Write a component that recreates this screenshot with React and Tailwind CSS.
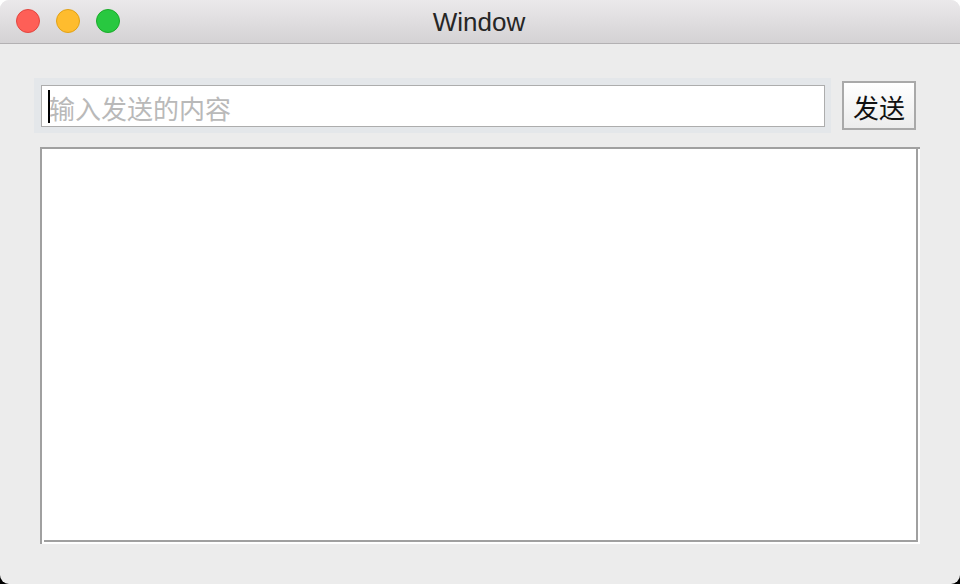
import React from "react";

const Light = ({ bg, ring }) => (
  <div className={`w-[24px] h-[24px] rounded-full border ${bg} ${ring}`} />
);

const App = () => {
  return (
    <div className="w-[960px] h-[584px] bg-[linear-gradient(to_bottom,#ffffff_50%,#000000_50%)]">
      <div className="w-full h-full bg-[#ececec] rounded-[9px] overflow-hidden flex flex-col">
        <div className="relative h-[44px] shrink-0 bg-[linear-gradient(to_bottom,#ebe9eb,#d4d2d4)] border-b border-[#b3b1b3] flex items-center justify-center">
          <div className="absolute left-[16px] top-[9px] flex gap-[16px]">
            <Light bg="bg-[#fe5f57]" ring="border-[#e2463f]" />
            <Light bg="bg-[#febc2e]" ring="border-[#e1a116]" />
            <Light bg="bg-[#28c840]" ring="border-[#1aab29]" />
          </div>
          <span className="text-[26px] text-[#262626] font-['Liberation_Sans',sans-serif] leading-none pt-[1px] -ml-[2px]">
            Window
          </span>
        </div>

        <div className="flex items-center mt-[34px] pl-[34px]">
          <div className="w-[797px] h-[55px] bg-[#e4e7ea] pt-[7px] pl-[7px] pr-[6px] pb-[6px]">
            <div className="w-full h-full bg-white border border-[#adadad] flex items-center pl-[6px]">
              <div className="w-[2px] h-[33px] bg-black mt-[1px]" />
              <span className="text-[26px] leading-none text-[#b9b9b9] font-['Noto_Sans_CJK_SC',sans-serif] -ml-[1px] pt-[4px]">
                输入发送的内容
              </span>
            </div>
          </div>
          <button className="ml-[11px] w-[74px] h-[49px] border-2 border-[#a9a9a9] bg-[linear-gradient(to_bottom,#ffffff,#ececec)] flex items-center justify-center text-[26px] leading-none text-[#111] font-['Noto_Sans_CJK_SC',sans-serif] pt-[2px]">
            发送
          </button>
        </div>

        <div className="mt-[14px] ml-[40px] w-[880px] h-[397px] bg-white border-t-2 border-l-2 border-[#a0a0a0] pr-[2px] pb-[2px] pl-[2px]">
          <div className="w-full h-full border-r-2 border-b-2 border-[#a0a0a0]" />
        </div>
      </div>
    </div>
  );
};

export default App;
